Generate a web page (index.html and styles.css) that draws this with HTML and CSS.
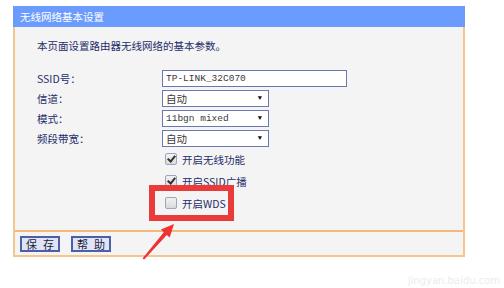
FILE: index.html
```html
<!DOCTYPE html>
<html lang="zh-CN">
<head>
    <meta charset="UTF-8">
    <title>无线网络基本设置</title>
    <link rel="stylesheet" href="styles.css">
</head>
<body>

<div class="page">
    <div class="panel">
        <div class="panel-title">无线网络基本设置</div>

        <div class="panel-body">
            <p class="intro">本页面设置路由器无线网络的基本参数。</p>

            <div class="form-grid">
                <label>SSID号：</label>
                <div class="text-box">TP-LINK_32C070</div>

                <label>信道：</label>
                <div class="select-box"><span class="cn">自动</span><span class="caret">▼</span></div>

                <label>模式：</label>
                <div class="select-box"><span>11bgn mixed</span><span class="caret">▼</span></div>

                <label>频段带宽：</label>
                <div class="select-box"><span class="cn">自动</span><span class="caret">▼</span></div>
            </div>

            <div class="checks">
                <div class="check-row"><span class="check on"></span>开启无线功能</div>
                <div class="check-row"><span class="check on"></span>开启SSID广播</div>
                <div class="check-row"><span class="check"></span>开启WDS</div>
            </div>
        </div>

        <div class="panel-foot">
            <button class="btn">保存</button>
            <button class="btn">帮助</button>
        </div>
    </div>

    <!-- annotation drawn over the screenshot -->
    <div class="mark-box"></div>
    <svg class="mark-arrow" width="504" height="288" viewBox="0 0 504 288">
        <polygon points="142.5,258.5 163.8,232.3 160.9,229.6 174,224 169.7,237.6 166.8,234.9 144.2,259.4" fill="#ee3333"/>
    </svg>

    <div class="watermark">jingyan.baidu.com</div>
</div>

</body>
</html>
```

FILE: styles.css
```css
body {
    margin: 0;
    background: #fff;
    font-family: "Noto Sans CJK SC", "DejaVu Sans", sans-serif;
    font-size: 10.5px;
    color: #1f2d6b;
}

.page {
    position: relative;
    width: 504px;
    height: 288px;
    overflow: hidden;
    padding-top: 6px;
    box-sizing: border-box;
}

.panel {
    margin-left: 13px;
    width: 452px;
    border-left: 2px solid #f6c58e;
    border-right: 2px solid #f6c58e;
    border-bottom: 2px solid #f6c58e;
    box-sizing: border-box;
    background: #f4f4f4;
}

.panel-title {
    height: 21px;
    line-height: 21px;
    margin: 0 -2px;
    padding-left: 7px;
    background: #6b9cfd;
    color: #fff;
}

.panel-body {
    padding: 12px 0 16px 22px;
    border-bottom: 2px solid #f6b878;
}

.intro {
    margin: 0 0 15px 0;
    line-height: 14px;
}

.form-grid {
    display: grid;
    grid-template-columns: 125px 1fr;
    grid-auto-rows: 20px;
    align-items: center;
}

.text-box,
.select-box {
    height: 17px;
    box-sizing: border-box;
    border: 1px solid #6c78ad;
    background: #fff;
    color: #3a3a3a;
    font-family: "Liberation Mono", monospace;
    font-size: 9.5px;
    line-height: 15px;
    padding-left: 3px;
}

.text-box {
    width: 185px;
}

.select-box {
    width: 107px;
    display: flex;
    justify-content: space-between;
}

.select-box .cn {
    font-family: "Noto Sans CJK SC", sans-serif;
    font-size: 10.5px;
}

.caret {
    font-size: 7px;
    margin-right: 6px;
    color: #111;
}

.checks {
    padding-left: 128px;
}

.check-row {
    height: 22px;
    display: flex;
    align-items: center;
}

.check {
    width: 10px;
    height: 10px;
    margin-right: 5px;
    border: 1px solid #9aa6c4;
    border-radius: 2px;
    background: linear-gradient(#f2f2f2, #dadada);
    position: relative;
}

.check.on::after {
    content: "";
    position: absolute;
    left: 3px;
    top: 0px;
    width: 3px;
    height: 6px;
    border-right: 2px solid #333;
    border-bottom: 2px solid #333;
    transform: rotate(40deg);
}

.panel-foot {
    height: 23px;
    display: flex;
    align-items: center;
    gap: 11px;
    padding-left: 5px;
}

.btn {
    height: 16px;
    width: 40px;
    padding: 0 0 0 4px;
    border: 2px solid #4d5fa8;
    background: #dfe4f6;
    color: #1c1c3a;
    font-family: "Noto Sans CJK SC", sans-serif;
    font-size: 11px;
    line-height: 12px;
    letter-spacing: 6px;
    text-align: left;
    white-space: nowrap;
    overflow: hidden;
}

.mark-box {
    position: absolute;
    left: 149px;
    top: 185px;
    width: 85px;
    height: 36px;
    border: 6px solid #ea3b3b;
    box-sizing: border-box;
}

.mark-arrow {
    position: absolute;
    left: 0;
    top: 0;
}

.watermark {
    position: absolute;
    right: 4px;
    bottom: 2px;
    color: #ececec;
    font-family: "DejaVu Sans", sans-serif;
    font-size: 10px;
}
```
